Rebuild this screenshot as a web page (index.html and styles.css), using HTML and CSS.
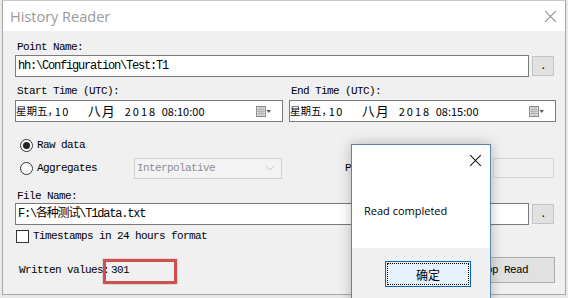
FILE: index.html
```html
<!DOCTYPE html>
<html lang="en">
<head>
    <meta charset="UTF-8">
    <title>History Reader</title>
    <link rel="stylesheet" href="styles.css">
</head>
<body>
    <div id="window">
        <div class="title-bar">
            <span class="title">History Reader</span>
            <span class="close-x"></span>
        </div>
        <div class="content">
            <div class="label first">Point Name:</div>
            <div class="input-row">
                <div class="textbox wide">hh:\Configuration\Test:T1</div>
                <div class="dot-btn">.</div>
            </div>

            <div class="pickers">
                <div class="picker-col">
                    <div class="label">Start Time (UTC):</div>
                    <div class="picker">
                        <span class="date"><span class="w">星期五</span><span class="c">，</span><span class="d">10</span><span class="m">八月</span><span class="y">2018</span><span class="t">08:10:00</span></span>
                        <svg class="cal" width="15" height="13" viewBox="0 0 15 13">
                            <rect x="0.5" y="1.5" width="9" height="10" fill="#e6e6e6" stroke="#8a8a8a"/>
                            <path d="M0.5 4.5h9M0.5 6.5h9M0.5 8.5h9M3 2v9M5 2v9M7 2v9" stroke="#b4b4b4" stroke-width="1"/>
                            <path d="M10.5 5h4.5l-2.25 3z" fill="#4a5a6a"/>
                        </svg>
                    </div>
                </div>
                <div class="picker-col">
                    <div class="label end">End Time (UTC):</div>
                    <div class="picker">
                        <span class="date"><span class="w">星期五</span><span class="c">，</span><span class="d">10</span><span class="m">八月</span><span class="y">2018</span><span class="t">08:15:00</span></span>
                        <svg class="cal" width="15" height="13" viewBox="0 0 15 13">
                            <rect x="0.5" y="1.5" width="9" height="10" fill="#e6e6e6" stroke="#8a8a8a"/>
                            <path d="M0.5 4.5h9M0.5 6.5h9M0.5 8.5h9M3 2v9M5 2v9M7 2v9" stroke="#b4b4b4" stroke-width="1"/>
                            <path d="M10.5 5h4.5l-2.25 3z" fill="#4a5a6a"/>
                        </svg>
                    </div>
                </div>
            </div>

            <div class="radio-row">
                <span class="radio checked"></span>
                <span class="opt">Raw data</span>
            </div>
            <div class="agg-row">
                <span class="radio"></span>
                <span class="opt agg">Aggregates</span>
                <div class="combo">
                    <span>Interpolative</span>
                    <svg width="10" height="6" viewBox="0 0 10 6"><path d="M1 1l4 4 4-4" fill="none" stroke="#c8c8c8"/></svg>
                </div>
                <span class="interval">Processing Interval (s):</span>
                <div class="textbox small"></div>
            </div>

            <div class="label file">File Name:</div>
            <div class="input-row">
                <div class="textbox wide">F:\各种测试\T1data.txt</div>
                <div class="dot-btn">.</div>
            </div>

            <div class="check-row">
                <span class="check"></span>
                <span class="opt">Timestamps in 24 hours format</span>
            </div>

            <div class="values-row">
                <span class="opt written">Written values:</span>
                <span class="opt count">301</span>
                <span class="mark"></span>
                <div class="stop-btn">Stop Read</div>
            </div>
        </div>
    </div>

    <div id="msgbox">
        <div class="msg-top">
            <span class="msg-close"></span>
            <div class="msg-text">Read completed</div>
        </div>
        <div class="msg-bottom">
            <div class="ok-btn"><span>确定</span></div>
        </div>
    </div>
</body>
</html>
```

FILE: styles.css
```css
*{
    margin: 0;
    padding: 0;
    box-sizing: border-box;
}
body{
    width: 568px;
    height: 298px;
    overflow: hidden;
    background: #e9e9e9;
    position: relative;
}
#window{
    margin-left: 2px;
    width: 564px;
    height: 295px;
    border: 1px solid #a8a8a8;
    border-top-color: #c8c8c8;
    background: #f0f0f0;
}
.title-bar{
    height: 30px;
    background: #fff;
    display: flex;
    align-items: center;
    justify-content: space-between;
    padding: 0 10px 0 7px;
}
.title{
    font-family: "Open Sans", sans-serif;
    font-size: 14.5px;
    color: #9a9a9a;
}
.close-x{
    width: 11px;
    height: 11px;
    position: relative;
}
.close-x::before, .close-x::after, .msg-close::before, .msg-close::after{
    content: "";
    position: absolute;
    left: 50%;
    top: -2px;
    width: 1px;
    height: 15px;
    background: #8a8a8a;
    transform: rotate(45deg);
}
.close-x::after, .msg-close::after{
    transform: rotate(-45deg);
}
.content{
    padding: 0 0 0 12px;
    font-family: "Liberation Mono", monospace;
    font-size: 11px;
    letter-spacing: -0.6px;
    color: #000;
}
.label{
    height: 14px;
    line-height: 14px;
    margin-top: 7px;
    padding-left: 2px;
}
.label.first{
    margin-top: 9px;
}
.label.file{
    margin-top: 10px;
}
.input-row{
    display: flex;
    align-items: center;
    gap: 3px;
    margin-top: 1px;
    height: 22px;
}
.label.file + .input-row{
    margin-top: 0;
}
.textbox{
    height: 22px;
    border: 1px solid #7a7a7a;
    background: #fff;
    line-height: 20px;
    padding-left: 2px;
    white-space: nowrap;
    font-size: 12px;
    letter-spacing: -1.2px;
}
.textbox.wide{
    width: 514px;
    font-family: "Liberation Mono", "Noto Sans CJK SC", monospace;
}
.dot-btn{
    width: 22px;
    height: 20px;
    border: 1px solid #c4c4c4;
    background: #e1e1e1;
    text-align: center;
    line-height: 18px;
    font-size: 11px;
}
.pickers{
    display: flex;
    gap: 6px;
}
.picker-col{
    display: flex;
    flex-direction: column;
}
.picker-col:first-child{
    width: 268px;
}
.picker-col:last-child{
    width: 267px;
}
.picker{
    margin-top: 2px;
    height: 22px;
    border: 1px solid #7a7a7a;
    background: #fff;
    display: flex;
    align-items: center;
    justify-content: space-between;
    padding: 0 11px 0 0;
}
.date{
    font-family: "Noto Sans CJK SC", "Noto Sans", sans-serif;
    font-size: 11px;
    letter-spacing: 0;
    white-space: nowrap;
    line-height: 20px;
    display: flex;
}
.date .w{
    font-size: 10.5px;
}
.date .c{
    font-size: 10.5px;
    font-feature-settings: "halt";
}
.date .d{
    margin-left: 2px;
    width: 33px;
    letter-spacing: 1.5px;
}
.date .m{
    width: 37px;
    font-size: 13px;
    letter-spacing: 1px;
}
.date .y{
    width: 37px;
    letter-spacing: 2px;
}
.cal{
    display: block;
}
.radio-row{
    margin-top: 15px;
    height: 16px;
    display: flex;
    align-items: center;
    padding-left: 5px;
}
.agg-row{
    margin-top: 4px;
    height: 22px;
    display: flex;
    align-items: center;
    padding-left: 5px;
}
.radio{
    width: 13px;
    height: 13px;
    border: 1px solid #333;
    border-radius: 50%;
    background: #fff;
    position: relative;
    flex: none;
}
.radio.checked::after{
    content: "";
    position: absolute;
    left: 2px;
    top: 2px;
    width: 7px;
    height: 7px;
    border-radius: 50%;
    background: #222;
}
.opt{
    margin-left: 4px;
    white-space: nowrap;
}
.opt.agg{
    width: 97px;
}
.combo{
    width: 148px;
    height: 21px;
    border: 1px solid #cfcfcf;
    background: #f3f3f3;
    color: #8d8d8d;
    display: flex;
    align-items: center;
    justify-content: space-between;
    padding: 0 6px 0 2px;
    font-size: 11px;
}
.interval{
    margin-left: 63px;
    width: 145px;
    white-space: nowrap;
}
.textbox.small{
    width: 61px;
    height: 20px;
    margin-left: 3px;
    border-color: #d6d6d6;
    background: #f0f0f0;
}
.check-row{
    margin-top: 4px;
    height: 14px;
    display: flex;
    align-items: center;
    padding-left: 1px;
}
.check{
    width: 13px;
    height: 13px;
    border: 1px solid #333;
    background: #fff;
}
.values-row{
    margin-top: 14px;
    height: 26px;
    display: flex;
    align-items: center;
    position: relative;
    padding-left: 4px;
}
.opt.written{
    margin-left: 0;
    width: 92px;
}
.opt.count{
    margin-left: 0;
}
.mark{
    position: absolute;
    left: 88px;
    top: 2px;
    width: 74px;
    height: 25px;
    border: 3px solid #c9514e;
    box-shadow: 0 0 1px #c9514e;
}
.stop-btn{
    margin-left: auto;
    margin-right: 10px;
    width: 92px;
    height: 26px;
    border: 1px solid #adadad;
    background: #e1e1e1;
    padding-left: 10px;
    line-height: 24px;
}
#msgbox{
    position: absolute;
    left: 351px;
    top: 144px;
    width: 140px;
    height: 160px;
    border: 1px solid #5d84ad;
    background: #f0f0f0;
    box-shadow: 0 0 12px rgba(0,0,0,0.25);
    font-family: "Open Sans", sans-serif;
    font-size: 11px;
}
.msg-top{
    height: 103px;
    background: #fff;
    position: relative;
    padding: 58px 0 0 12px;
}
.msg-close{
    position: absolute;
    left: 117px;
    top: 10px;
    width: 11px;
    height: 11px;
}
.msg-close::before, .msg-close::after{
    background: #111;
}
.msg-text{
    line-height: 16px;
}
.msg-bottom{
    padding: 13px 0 0 33px;
}
.ok-btn{
    width: 86px;
    height: 26px;
    border: 1px solid #0a64b4;
    background: #e5f1fb;
    padding: 1px;
}
.ok-btn span{
    display: block;
    height: 22px;
    border: 1px dotted #000;
    text-align: center;
    line-height: 21px;
    font-family: "Noto Sans CJK SC", sans-serif;
    font-size: 12px;
}
```
